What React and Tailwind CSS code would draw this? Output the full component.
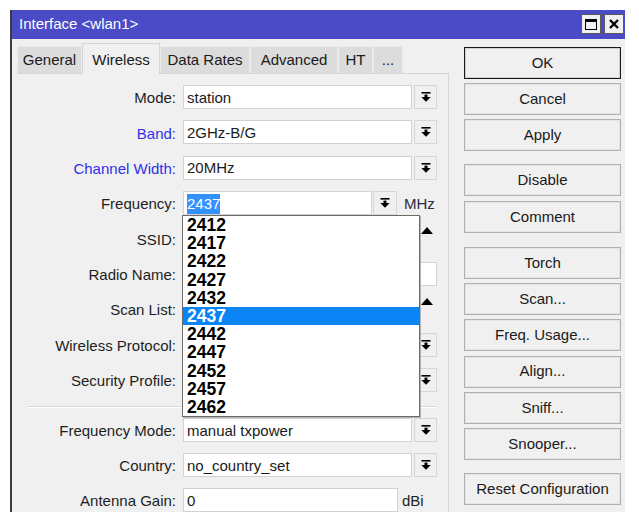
import React from "react";

const FONT = { fontFamily: '"Liberation Sans", Arial, sans-serif' };

const DownIcon = () => (
  <svg width="10" height="10" viewBox="0 0 10 10">
    <rect x="0.5" y="0" width="9" height="1.6" fill="#000" />
    <rect x="3.5" y="2.6" width="3" height="2.6" fill="#000" />
    <polygon points="0.3,5 9.7,5 5,9.8" fill="#000" />
  </svg>
);

const UpTri = () => (
  <svg width="12" height="7" viewBox="0 0 12 7">
    <polygon points="0,7 12,7 6,0" fill="#000" />
  </svg>
);

const Input = ({ w, children }) => (
  <div
    className={`h-[24px] bg-white border border-[#d2d2d2] pl-[3px] pt-[2px] flex items-center text-[15px] text-[#1a1a1a] whitespace-nowrap overflow-hidden ${w}`}
  >
    {children}
  </div>
);

const DropBtn = () => (
  <div className="h-[24px] w-[23px] bg-[#f0f0f0] border border-[#d6d6d6] flex items-center justify-center">
    <DownIcon />
  </div>
);

const Label = ({ children, blue }) => (
  <div
    className={`w-[159px] shrink-0 text-right text-[15px] pt-[3px] ${blue ? "text-[#3030e8]" : "text-[#1e1e1e]"}`}
  >
    {children}
  </div>
);

const Row = ({ label, blue, children }) => (
  <div className="flex items-center h-[24px]">
    <Label blue={blue}>{label}</Label>
    <div className="ml-[7px] flex items-center">{children}</div>
  </div>
);

const ComboRow = ({ label, blue, value }) => (
  <Row label={label} blue={blue}>
    <Input w="w-[229px]">{value}</Input>
    <div className="ml-[2px]">
      <DropBtn />
    </div>
  </Row>
);

const UpRow = ({ label }) => (
  <Row label={label}>
    <Input w="w-[229px]" />
    <div className="ml-[2px] w-[23px] h-[24px] flex items-start justify-center pt-[1px] pl-[2px]">
      <UpTri />
    </div>
  </Row>
);

const freqs = ["2412", "2417", "2422", "2427", "2432", "2437", "2442", "2447", "2452", "2457", "2462"];

const Btn = ({ children, def, className = "" }) => (
  <div
    className={`h-[32px] w-[157px] flex items-center justify-center text-[15px] text-[#1a1a1a] bg-[#f0f0f0] ${
      def
        ? "border border-[#1a1a1a] shadow-[inset_0_0_0_1px_#cfcfcf]"
        : "border border-[#b0b0b0] shadow-[inset_0_0_0_1px_#e4e4e4]"
    } ${className}`}
  >
    {children}
  </div>
);

const tabs = [
  { t: "General", w: "w-[65px]" },
  { t: "Wireless", w: "w-[78px]", active: true },
  { t: "Data Rates", w: "w-[90px]" },
  { t: "Advanced", w: "w-[88px]" },
  { t: "HT", w: "w-[35px]" },
  { t: "...", w: "w-[30px]" },
];

export default function App() {
  return (
    <div className="w-[639px] h-[520px] bg-white pl-[10px] pt-[10px]" style={FONT}>
      <div className="w-[615px] h-[502px] border-l-2 border-[#3c3c3c] flex flex-col overflow-hidden bg-[#f0f0f0]">
        {/* title bar */}
        <div className="h-[29px] bg-[#4b4bc8] flex items-center pl-[7px] pr-[1px]">
          <div className="text-white text-[15px] flex-1">Interface &lt;wlan1&gt;</div>
          <div className="flex gap-[3px] items-center">
            <div className="w-[20px] h-[20px] bg-[#f0f0f0] border border-[#5a5a5a] flex items-center justify-center">
              <div className="w-[12px] h-[11px] border border-black border-t-[3px]" />
            </div>
            <div className="w-[20px] h-[20px] bg-[#f0f0f0] border border-[#5a5a5a] flex items-center justify-center">
              <svg width="10" height="10" viewBox="0 0 10 10">
                <path d="M1 1 L9 9 M9 1 L1 9" stroke="#000" strokeWidth="2.4" />
              </svg>
            </div>
          </div>
        </div>

        {/* body */}
        <div className="flex flex-1 pl-[5px]">
          {/* left panel */}
          <div className="w-[432px] flex flex-col pt-[4px]">
            <div className="flex items-end h-[30px]">
              {tabs.map((tab) =>
                tab.active ? (
                  <div
                    key={tab.t}
                    className={`${tab.w} h-[31px] -mb-[1px] relative z-10 bg-[#f0f0f0] border-t border-l border-r border-[#d6d6d6] flex items-start justify-center pt-[5px] text-[15px] text-[#1a1a1a]`}
                  >
                    {tab.t}
                  </div>
                ) : (
                  <div
                    key={tab.t}
                    className={`${tab.w} h-[27px] bg-[#dcdcdc] border-t border-l border-r border-[#ececec] flex items-center justify-center pt-[1px] text-[15px] text-[#1a1a1a]`}
                  >
                    {tab.t}
                  </div>
                )
              )}
            </div>
            <div className="flex-1 border-t border-r border-[#d6d6d6] pt-[11px]">
              <div className="flex flex-col gap-[11.4px]">
                <ComboRow label="Mode:" value="station" />
                <ComboRow label="Band:" blue value="2GHz-B/G" />
                <ComboRow label="Channel Width:" blue value="20MHz" />
                <Row label="Frequency:">
                  <div className="relative">
                    <Input w="w-[189px]">
                      <span className="bg-[#3390ff] text-white leading-[20px]">2437</span>
                    </Input>
                    <div className="absolute left-[-1px] top-[24px] w-[238px] bg-white border border-[#6a6a6a] shadow-[1px_1px_0_#b4b4b4] z-20 py-0">
                      {freqs.map((f) => (
                        <div
                          key={f}
                          className={`h-[18.2px] leading-[18.2px] pl-[4px] font-bold text-[17.5px] ${
                            f === "2437" ? "bg-[#0b84f5] text-white" : "text-black"
                          }`}
                        >
                          {f}
                        </div>
                      ))}
                    </div>
                  </div>
                  <div className="ml-[1px] h-[24px] w-[24px] bg-[#f0f0f0] border border-[#d6d6d6] flex items-center justify-center">
                    <DownIcon />
                  </div>
                  <div className="ml-[7px] pt-[3px] text-[15px] text-[#2a2a3a]">MHz</div>
                </Row>
                <UpRow label="SSID:" />
                <Row label="Radio Name:">
                  <Input w="w-[254px]" />
                </Row>
                <UpRow label="Scan List:" />
                <ComboRow label="Wireless Protocol:" value="" />
                <ComboRow label="Security Profile:" value="" />
              </div>
              <div className="ml-[10px] mt-[14px] w-[410px] border-t border-[#d8d8d8] border-b border-b-white" />
              <div className="flex flex-col gap-[11px] mt-[10px]">
                <ComboRow label="Frequency Mode:" value="manual txpower" />
                <ComboRow label="Country:" value="no_country_set" />
                <Row label="Antenna Gain:">
                  <Input w="w-[215px]">0</Input>
                  <div className="ml-[4px] pt-[3px] text-[15px] text-[#1e1e1e]">dBi</div>
                </Row>
              </div>
            </div>
          </div>

          {/* right buttons */}
          <div className="ml-[15px] pt-[8px] flex flex-col">
            <div className="flex flex-col gap-[4.3px]">
              <Btn def>OK</Btn>
              <Btn>Cancel</Btn>
              <Btn>Apply</Btn>
            </div>
            <div className="flex flex-col gap-[4.3px] mt-[13px]">
              <Btn>Disable</Btn>
              <Btn>Comment</Btn>
            </div>
            <div className="flex flex-col gap-[4.3px] mt-[14px]">
              <Btn>Torch</Btn>
              <Btn>Scan...</Btn>
              <Btn>Freq. Usage...</Btn>
              <Btn>Align...</Btn>
              <Btn>Sniff...</Btn>
              <Btn>Snooper...</Btn>
            </div>
            <div className="mt-[13px]">
              <Btn>Reset Configuration</Btn>
            </div>
          </div>
        </div>
      </div>
    </div>
  );
}
